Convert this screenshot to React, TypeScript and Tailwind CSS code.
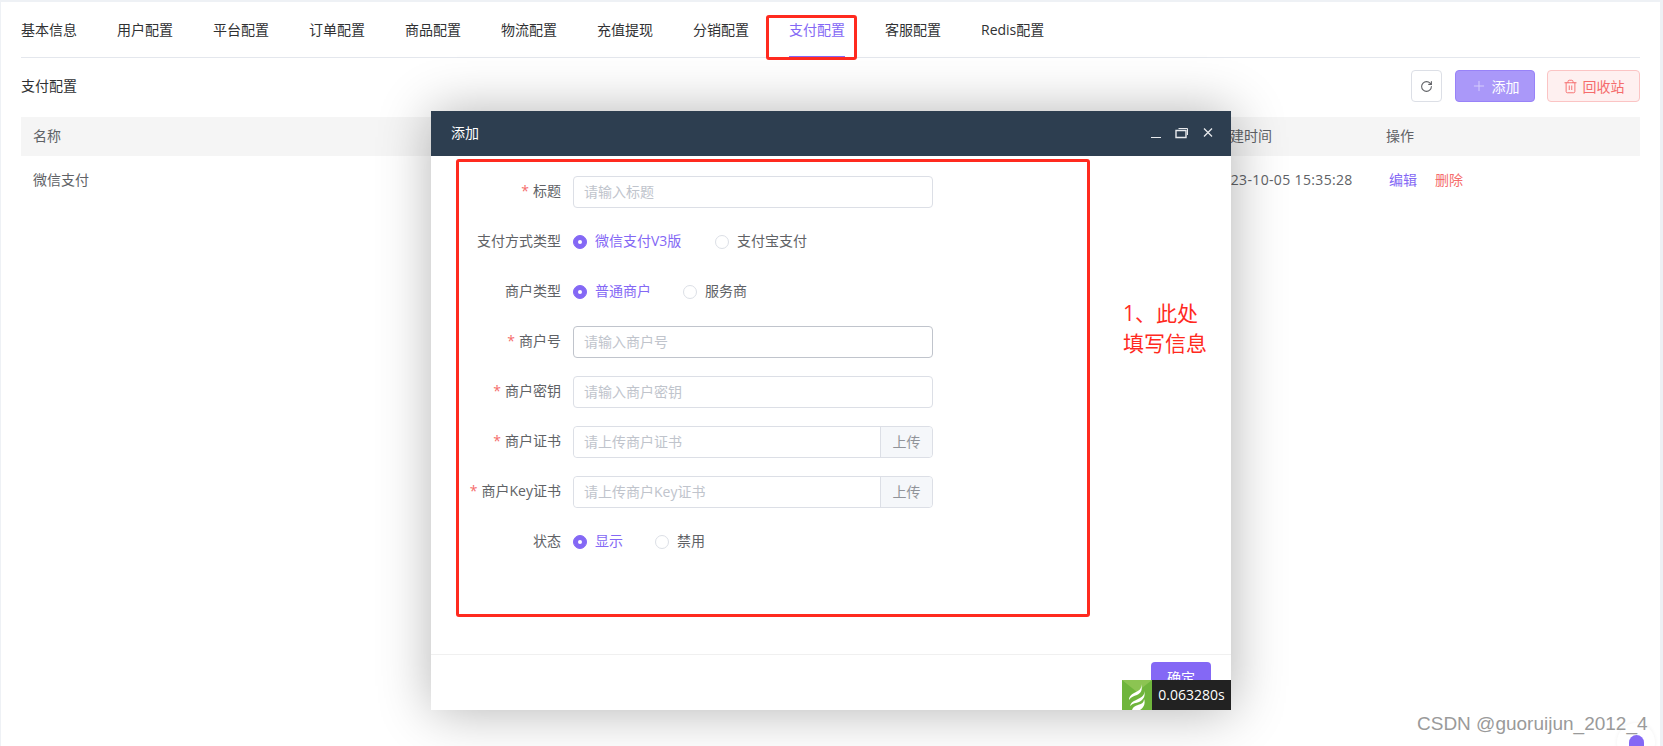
import React from "react";
import { RotateCw, Plus, Trash2 } from "lucide-react";

const tabs = ["基本信息","用户配置","平台配置","订单配置","商品配置","物流配置","充值提现","分销配置","支付配置","客服配置","Redis配置"];

function Row({ label, req, children }: { label: string; req?: boolean; children: React.ReactNode }) {
  return (
    <div className="flex items-center h-8 mb-[18px]">
      <label className="w-[130px] pr-3 pb-[2px] text-right text-[14px] leading-[30px] text-[#606266] whitespace-nowrap">
        {req && <span className="text-[#f56c6c] mr-1">*</span>}
        {label}
      </label>
      {children}
    </div>
  );
}

function Input({ ph, hover }: { ph: string; hover?: boolean }) {
  return (
    <div className={`w-[360px] h-8 rounded-[4px] border bg-white px-[10px] text-[14px] leading-[30px] text-[#c0c4cc] ${hover ? "border-[#c0c4cc]" : "border-[#dcdfe6]"}`}>
      {ph}
    </div>
  );
}

function Upload({ ph }: { ph: string }) {
  return (
    <div className="w-[360px] h-8 flex rounded-[4px] border border-[#dcdfe6] text-[14px] leading-[30px]">
      <div className="flex-1 px-[10px] text-[#c0c4cc] bg-white rounded-l-[4px]">{ph}</div>
      <div className="w-[52px] text-center bg-[#f5f7fa] text-[#909399] border-l border-[#dcdfe6] rounded-r-[4px]">上传</div>
    </div>
  );
}

function Radio({ label, on, w }: { label: string; on?: boolean; w: string }) {
  return (
    <div className={`flex items-center ${w}`}>
      <span className={`w-[14px] h-[14px] rounded-full flex items-center justify-center border ${on ? "bg-[#8468f5] border-[#8468f5]" : "bg-white border-[#dcdfe6]"}`}>
        {on && <span className="w-1 h-1 rounded-full bg-white" />}
      </span>
      <span className={`ml-2 pb-[2px] text-[14px] leading-[20px] ${on ? "text-[#8468f5]" : "text-[#606266]"}`}>{label}</span>
    </div>
  );
}

export default function App() {
  return (
    <div
      className="relative w-[1663px] h-[746px] overflow-hidden bg-[#eef1f5] pt-[2px] pl-px pr-[3px]"
      style={{ fontFamily: '"Open Sans","Noto Sans CJK SC",sans-serif' }}
    >
      <div className="h-[744px] bg-white px-5">
        {/* tabs */}
        <div className="flex gap-10 h-[56px] border-b border-[#e4e7ed] text-[14px] text-[#303133]">
          {tabs.map((t) => (
            <div key={t} className={`relative h-[56px] leading-[56px] whitespace-nowrap ${t === "支付配置" ? "text-[#8468f5] border-b-2 border-[#8468f5]" : ""}`}>
              {t}
            </div>
          ))}
        </div>

        {/* toolbar */}
        <div className="flex items-center justify-between h-[32px] mt-[12px]">
          <span className="text-[14px] text-[#303133] mb-[2px]">支付配置</span>
          <div className="flex">
            <div className="w-[31px] h-[32px] flex items-center justify-center rounded-[4px] border border-[#dcdfe6] text-[#606266]">
              <RotateCw size={13} />
            </div>
            <div className="ml-[13px] w-[80px] h-[32px] flex items-center justify-center rounded-[4px] border border-[#9882f8] bg-[#aa98f9] text-white text-[14px]">
              <Plus size={16} strokeWidth={1.5} className="mr-[5px] text-[#d5ccfc]" />添加
            </div>
            <div className="ml-3 w-[93px] h-[32px] flex items-center justify-center rounded-[4px] border border-[#fbc4c4] bg-[#fef0f0] text-[#f56c6c] text-[14px]">
              <Trash2 size={15} strokeWidth={1.5} className="mr-[5px]" />回收站
            </div>
          </div>
        </div>

        {/* table */}
        <div className="mt-[15px] h-[39px] bg-[#f5f5f5] flex items-center pl-3 pb-[2px] text-[14px] text-[#606266]">
          <span className="w-[1183px]">名称</span>
          <span className="w-[170px]">创建时间</span>
          <span>操作</span>
        </div>
        <div className="h-[50px] flex items-center pl-3 pb-[4px] text-[14px] text-[#606266]">
          <span className="w-[1181px]">微信支付</span>
          <span className="w-[175px] whitespace-nowrap tracking-[0.35px]">2023-10-05 15:35:28</span>
          <span className="text-[#8468f5]">编辑</span>
          <span className="ml-[18px] text-[#f56c6c]">删除</span>
        </div>
      </div>

      {/* modal */}
      <div className="absolute left-[431px] top-[111px] w-[800px] h-[599px] bg-white flex flex-col shadow-[1px_1px_50px_rgba(0,0,0,0.3)]">
        <div className="h-[45px] shrink-0 bg-[#2d3e50] flex items-center justify-between pl-5 pr-[17px] pb-[2px] text-white">
          <span className="text-[14px]">添加</span>
          <div className="flex items-center gap-[13px] text-[#e8eaed]">
            <svg width="12" height="12" viewBox="0 0 12 12" fill="none" stroke="currentColor"><path d="M1 10.5h10" /></svg>
            <svg width="14" height="12" viewBox="0 0 14 12" fill="none" stroke="currentColor"><path d="M1 3.5h10v7H1z" strokeWidth="1.4" /><path d="M3.5 1.5h9v6.5" /></svg>
            <svg width="12" height="12" viewBox="0 0 12 12" fill="none" stroke="currentColor" strokeWidth="1.3"><path d="M2 1.5l8 8M10 1.5l-8 8" /></svg>
          </div>
        </div>
        <div className="flex-1 pt-5 pl-[12px]">
          <Row label="标题" req><Input ph="请输入标题" /></Row>
          <Row label="支付方式类型">
            <Radio label="微信支付V3版" on w="w-[142px]" />
            <Radio label="支付宝支付" w="" />
          </Row>
          <Row label="商户类型">
            <Radio label="普通商户" on w="w-[110px]" />
            <Radio label="服务商" w="" />
          </Row>
          <Row label="商户号" req><Input ph="请输入商户号" hover /></Row>
          <Row label="商户密钥" req><Input ph="请输入商户密钥" /></Row>
          <Row label="商户证书" req><Upload ph="请上传商户证书" /></Row>
          <Row label="商户Key证书" req><Upload ph="请上传商户Key证书" /></Row>
          <Row label="状态">
            <Radio label="显示" on w="w-[82px]" />
            <Radio label="禁用" w="" />
          </Row>
        </div>
        <div className="h-[56px] shrink-0 border-t border-[#f0f0f0] flex justify-end pr-5 pt-[7px] overflow-hidden">
          <div className="w-[60px] h-[32px] rounded-[4px] bg-[#8468f5] text-white text-[14px] leading-[32px] text-center">确定</div>
        </div>
      </div>

      {/* red annotations */}
      <div className="absolute left-[766px] top-[15px] w-[91px] h-[45px] border-[3px] border-[#ff2a1f] rounded-[3px]" />
      <div className="absolute left-[456px] top-[159px] w-[634px] h-[458px] border-[3px] border-[#ff2a1f] rounded-[3px]" />
      <div className="absolute left-[1123px] top-[298px] text-[21px] leading-[30px] text-[#ff2a1f] whitespace-nowrap">
        1、此处<br />填写信息
      </div>

      {/* debug badge */}
      <div className="absolute left-[1122px] top-[680px] h-[30px] flex overflow-hidden">
        <div className="w-[30px] h-[30px] bg-[#6fb53c]">
          <svg width="30" height="30" viewBox="0 0 30 30">
            <path d="M0 0h30L15 12z" fill="#8cc452" />
            <path d="M19 4c1 4-1 6-5 8-4 2-7 4-7 8 2-3 5-4 8-5 4-2 6-5 4-11z" fill="#fff" />
            <path d="M22 11c1 4-2 6-6 8-4 2-7 3-8 7 3-3 6-3 9-4 4-2 7-6 5-11z" fill="#fff" />
            <path d="M22 19c0 4-3 5-6 6-3 1-5 2-6 5h8c3-2 6-6 4-11z" fill="#fff" />
          </svg>
        </div>
        <div className="w-[79px] bg-[#222] text-white text-[14px] leading-[30px] text-center">0.063280s</div>
      </div>

      {/* floating help */}
      <div className="absolute left-[1617px] top-[723px] w-[38px] h-[38px] rounded-full bg-white shadow-[0_0_4px_rgba(0,0,0,0.06)] flex justify-center pt-3">
        <div className="w-[15px] h-[20px] rounded-t-[8px] bg-[#8468f5]" />
      </div>

      {/* watermark */}
      <div className="absolute left-[1417px] top-[710px] text-[19px] leading-[28px] text-[#9a9a9a] whitespace-nowrap" style={{ fontFamily: '"Liberation Sans",sans-serif' }}>
        CSDN @guoruijun_2012_4
      </div>
    </div>
  );
}
